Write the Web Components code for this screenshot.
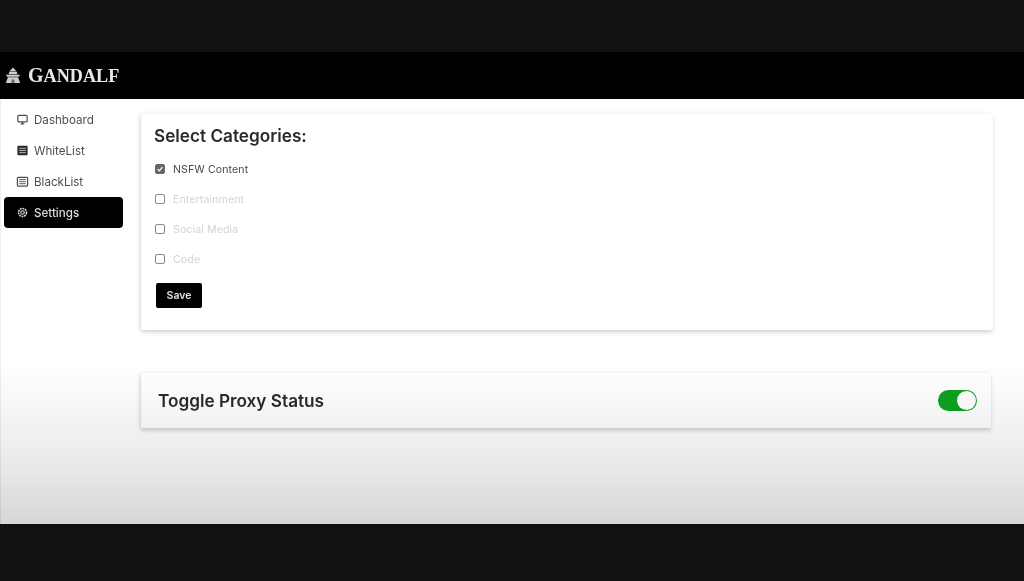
<!DOCTYPE html>
<html><head><meta charset="utf-8"><style>
html,body{margin:0;height:581px;overflow:hidden;background:#111}
body{font-family:Inter,"Liberation Sans",sans-serif}
</style></head><body>
<app-shell>
  <top-bar slot="top"></top-bar>
  <side-nav slot="side">
    <nav-item label="Dashboard" icon="monitor"></nav-item>
    <nav-item label="WhiteList" icon="list" tone="dark"></nav-item>
    <nav-item label="BlackList" icon="list2"></nav-item>
    <nav-item label="Settings" icon="gear" active></nav-item>
  </side-nav>
  <category-card slot="main"></category-card>
  <proxy-card slot="main"></proxy-card>
</app-shell>
<script>
const ICONS={
 monitor:'<rect x="2" y="2.5" width="10" height="7" rx="1" fill="none" stroke="currentColor" stroke-width="1.3"/><path d="M7 9.5v2M5 11.7h4" stroke="currentColor" stroke-width="1.3" fill="none"/>',
 list:'<rect x="1.5" y="2" width="11" height="10" rx="1" fill="currentColor"/><path d="M3.5 4.7h7M3.5 7h7M3.5 9.3h7" stroke="#fff" stroke-width="1" opacity=".7"/>',
 list2:'<rect x="1.5" y="2.5" width="11" height="9.5" rx="1" fill="none" stroke="currentColor" stroke-width="1.3"/><path d="M3.5 5h7M3.5 7.2h7M3.5 9.4h7" stroke="currentColor" stroke-width="1"/>',
 gear:'<circle cx="7" cy="7" r="1.9" fill="none" stroke="currentColor" stroke-width="1.2"/><circle cx="7" cy="7" r="4.3" fill="none" stroke="currentColor" stroke-width="1.7" stroke-dasharray="2 .8"/>'
};
function def(name,css,html){
  customElements.define(name,class extends HTMLElement{
    connectedCallback(){
      if(this.shadowRoot)return;
      const r=this.attachShadow({mode:'open'});
      r.innerHTML='<style>'+css+'</style>'+html;
    }
  });
}
def('app-shell',`
 :host{display:flex;flex-direction:column;height:581px;padding:52px 0 57px;box-sizing:border-box;position:relative;filter:blur(.5px)}
 .top{flex:none}
 .body{flex:1;display:flex;background:#fff;border-left:1px solid #ececec;min-height:0}
 .side{flex:none;width:140px}
 .main{flex:1;display:flex;flex-direction:column;gap:43px;padding:15px 31px 0 0;min-width:0}
 .shade{position:absolute;left:0;right:0;top:365px;height:159px;pointer-events:none;
   background:linear-gradient(to bottom,rgba(0,0,0,0),rgba(0,0,0,.04) 30%,rgba(0,0,0,.09) 65%,rgba(0,0,0,.16))}
`,`<div class="top"><slot name="top"></slot></div>
 <div class="body"><div class="side"><slot name="side"></slot></div><div class="main"><slot name="main"></slot></div></div>
 <div class="shade"></div>`);
def('top-bar',`
 :host{display:flex;align-items:center;height:47px;background:#000;padding-left:5px;gap:7px}
 svg{width:16px;height:17px;flex:none}
 .name{font:700 18.2px/1 "Liberation Serif",serif;color:#e8e8e8}
 .name b{font-size:20px}
`,`<svg viewBox="0 0 16 17" fill="#cfcfcf"><path d="M8 .5l3.2 3.6H4.8z"/><path d="M4.4 4.6h7.2l.8 2.6H3.6z"/><path d="M.8 7.8h14.4l-1.4 2H2.2z"/><path d="M3 10.2h10l2.2 5.8H.8z"/><path d="M6.6 12.5h2.8v3.5H6.6z" fill="#666"/></svg><span class="name"><b>G</b>ANDALF</span>`);
def('side-nav',`:host{display:flex;flex-direction:column;padding:5px 0 0 3px;width:119px}`,`<slot></slot>`);
customElements.define('nav-item',class extends HTMLElement{
  connectedCallback(){
    if(this.shadowRoot)return;
    const r=this.attachShadow({mode:'open'});
    const tone=this.getAttribute('tone');
    r.innerHTML=`<style>
     :host{display:flex;align-items:center;height:31px;gap:5px;padding-left:12px;box-sizing:border-box;border-radius:4px;
       font-size:11.6px;font-weight:400;color:#4e4e4e}
     :host([active]){background:#000;color:#dcdcdc;font-weight:500}
     svg{width:13px;height:13px;flex:none;${tone==='dark'?'color:#2b2b2b':''}}
     </style><svg viewBox="0 0 14 14">${ICONS[this.getAttribute('icon')]}</svg><span>${this.getAttribute('label')}</span>`;
  }
});
def('check-row',`
 :host{display:flex;align-items:center;height:30px;gap:8px;font-size:10.6px;color:#d4d4d4;letter-spacing:.1px}
 :host([on]){color:#4a4a4a}
 .b{width:8px;height:8px;border:1px solid #8a8a8a;border-radius:2px;background:#fff;display:flex;align-items:center;justify-content:center}
 :host([on]) .b{background:#666;border-color:#666}
 svg{width:8px;height:8px;display:none}
 :host([on]) svg{display:block}
`,`<span class="b"><svg viewBox="0 0 9 9"><path d="M1.8 4.6l1.9 2L7.2 2.4" fill="none" stroke="#fff" stroke-width="1.4"/></svg></span><span><slot></slot></span>`);
def('category-card',`
 :host{display:block;height:216px;box-sizing:border-box;background:#fff;border-radius:3px;padding:10px 13px;
   box-shadow:0 3px 4px rgba(0,0,0,.12),-2px 0 5px rgba(0,0,0,.07),0 -1px 6px rgba(0,0,0,.02)}
 h2{margin:0 0 6px;font-size:17.2px;line-height:24px;font-weight:600;color:#2a2a2a}
 .list{padding-left:1px}
 button{all:unset;display:block;box-sizing:border-box;margin:9px 0 0 2px;width:46px;height:25px;background:#000;color:#e0e0e0;border-radius:2px;
   font:600 10.5px/25px Inter,"Liberation Sans",sans-serif;text-align:center}
`,`<h2>Select Categories:</h2>
 <div class="list">
 <check-row on>NSFW Content</check-row><check-row>Entertainment</check-row><check-row>Social Media</check-row><check-row>Code</check-row>
 </div><button>Save</button>`);
def('proxy-card',`
 :host{display:flex;align-items:center;justify-content:space-between;height:55px;margin-right:2px;box-sizing:border-box;padding:0 14px 0 17px;background:#fff;
   box-shadow:0 3px 4px rgba(0,0,0,.15),-2px 0 4px rgba(0,0,0,.08)}
 h2{margin:0 0 1px;font-size:17.2px;font-weight:600;color:#2a2a2a}
`,`<h2>Toggle Proxy Status</h2><toggle-switch></toggle-switch>`);
def('toggle-switch',`
 :host{display:block;width:39px;height:21px;border-radius:11px;background:#0ea21f;position:relative}
 i{position:absolute;right:1px;top:1px;width:19px;height:19px;border-radius:50%;background:#fff}
`,`<i></i>`);
</script>
</body></html>
